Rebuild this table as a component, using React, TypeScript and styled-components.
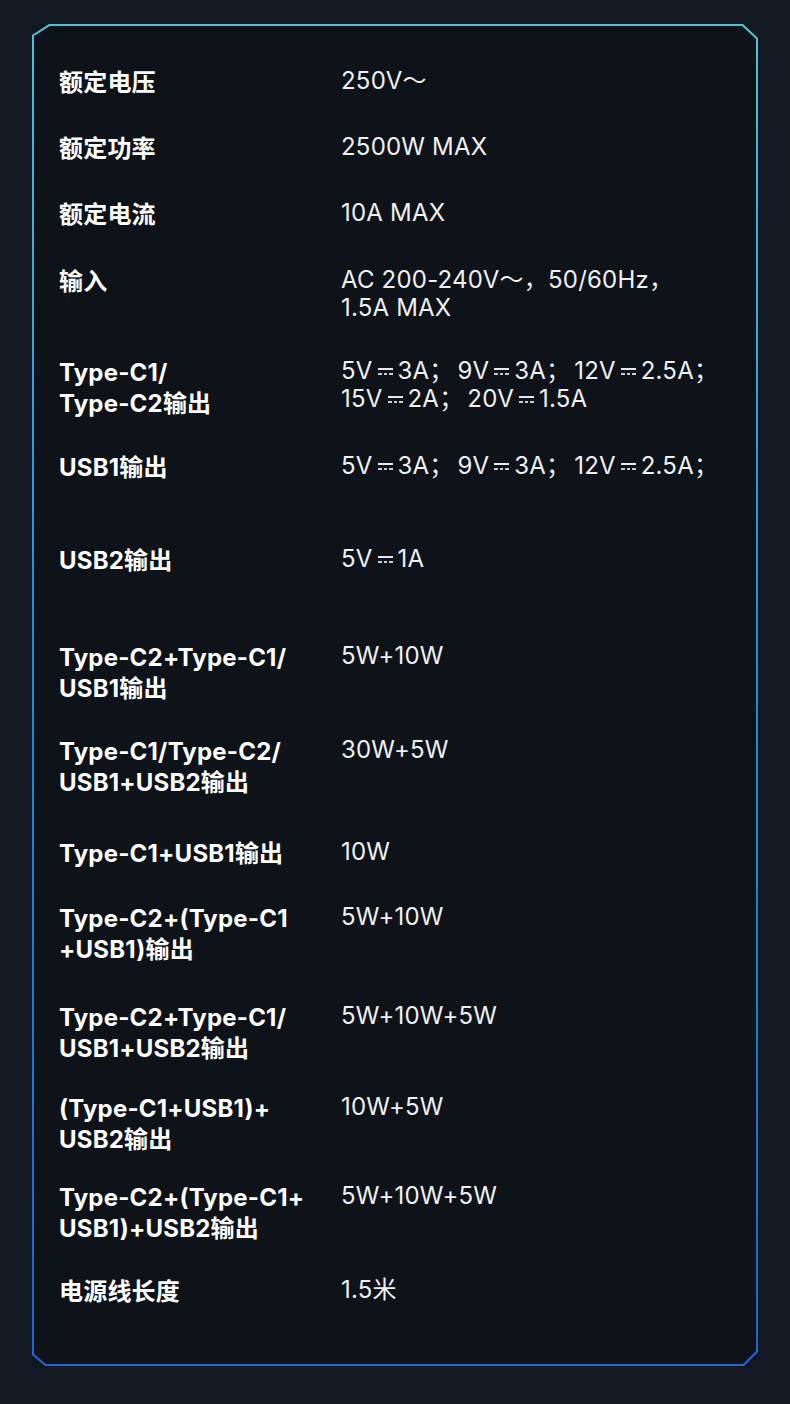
import React from 'react';
import styled, { createGlobalStyle } from 'styled-components';

const GlobalStyle = createGlobalStyle`
  html, body {
    margin: 0;
    padding: 0;
    background: #111821;
  }
  body {
    font-family: Inter, 'Noto Sans CJK SC', sans-serif;
    -webkit-font-smoothing: antialiased;
  }
`;

const Page = styled.div`
  width: 790px;
  min-height: 1404px;
  box-sizing: border-box;
  padding: 24px 32px 38px;
  background: #111821;
`;

/* gradient frame: outer layer is the border, inner layer the dark face */
const Frame = styled.div`
  padding: 2px;
  background: linear-gradient(180deg, #52bfd9 0%, #2a8ad2 45%, #2562d2 100%);
  clip-path: polygon(
    17px 0, calc(100% - 15px) 0, 100% 14px, 100% calc(100% - 14px),
    calc(100% - 14px) 100%, 13px 100%, 0 calc(100% - 11px), 0 11px
  );
`;

const Panel = styled.div`
  min-height: 1338px;
  box-sizing: border-box;
  background: #0e1219;
  padding: 41px 20px 0 25px;
  clip-path: polygon(
    16px 0, calc(100% - 14px) 0, 100% 13px, 100% calc(100% - 13px),
    calc(100% - 13px) 100%, 12px 100%, 0 calc(100% - 10px), 0 10px
  );
`;

const Row = styled.div<{ $h?: number }>`
  display: grid;
  grid-template-columns: 282px 1fr;
  align-items: start;
  min-height: ${(p) => (p.$h ? `${p.$h}px` : 'auto')};
`;

const Label = styled.div`
  font-family: Inter, 'Noto Sans CJK SC', sans-serif;
  font-weight: 700;
  font-size: 24px;
  line-height: 31px;
  color: #ffffff;
  letter-spacing: 0.2px;
`;

const Value = styled.div`
  font-family: Inter, 'Noto Sans CJK SC', sans-serif;
  font-weight: 400;
  font-size: 24px;
  line-height: 28px;
  color: #eef0f3;
  letter-spacing: 0.2px;
  white-space: nowrap;
`;

const Line = styled.div``;

const Semi = styled.span`
  margin-right: 4px;
`;

// DC mark: solid bar over a dashed bar
const Dc = styled.span`
  display: inline-block;
  position: relative;
  width: 15px;
  height: 7px;
  margin: 0 5px;
  vertical-align: 4px;
  border-top: 2px solid #e6e8ec;
  box-sizing: border-box;

  &::after {
    content: '';
    position: absolute;
    left: 0;
    right: 0;
    bottom: 0;
    height: 2px;
    background: repeating-linear-gradient(90deg, #c9ccd2 0 3.6px, transparent 3.6px 5.7px);
  }
`;

type Spec = { label: string[]; value: string[]; h?: number };

const specs: Spec[] = [
  { label: ['额定电压'], value: ['250V～'], h: 66 },
  { label: ['额定功率'], value: ['2500W MAX'], h: 66 },
  { label: ['额定电流'], value: ['10A MAX'], h: 67 },
  { label: ['输入'], value: ['AC 200-240V～，50/60Hz，', '1.5A MAX'], h: 91 },
  { label: ['Type-C1/', 'Type-C2输出'], value: ['5V⎓3A；9V⎓3A；12V⎓2.5A；', '15V⎓2A；20V⎓1.5A'], h: 95 },
  { label: ['USB1输出'], value: ['5V⎓3A；9V⎓3A；12V⎓2.5A；'], h: 93 },
  { label: ['USB2输出'], value: ['5V⎓1A'], h: 97 },
  { label: ['Type-C2+Type-C1/', 'USB1输出'], value: ['5W+10W'], h: 94 },
  { label: ['Type-C1/Type-C2/', 'USB1+USB2输出'], value: ['30W+5W'], h: 102 },
  { label: ['Type-C1+USB1输出'], value: ['10W'], h: 65 },
  { label: ['Type-C2+(Type-C1', '+USB1)输出'], value: ['5W+10W'], h: 99 },
  { label: ['Type-C2+Type-C1/', 'USB1+USB2输出'], value: ['5W+10W+5W'], h: 91 },
  { label: ['(Type-C1+USB1)+', 'USB2输出'], value: ['10W+5W'], h: 89 },
  { label: ['Type-C2+(Type-C1+', 'USB1)+USB2输出'], value: ['5W+10W+5W'], h: 94 },
  { label: ['电源线长度'], value: ['1.5米'] },
];

function renderValue(text: string) {
  return text.split('；').map((group, g, all) => (
    <React.Fragment key={g}>
      {group.split('⎓').map((part, i) => (
        <React.Fragment key={i}>
          {i > 0 && <Dc />}
          {part}
        </React.Fragment>
      ))}
      {g < all.length - 1 && <Semi>；</Semi>}
    </React.Fragment>
  ));
}

export default function App() {
  return (
    <Page>
      <GlobalStyle />
      <Frame>
        <Panel>
          {specs.map((s, i) => (
            <Row key={i} $h={s.h}>
              <Label>
                {s.label.map((l) => (
                  <Line key={l}>{l}</Line>
                ))}
              </Label>
              <Value>
                {s.value.map((v) => (
                  <Line key={v}>{renderValue(v)}</Line>
                ))}
              </Value>
            </Row>
          ))}
        </Panel>
      </Frame>
    </Page>
  );
}
